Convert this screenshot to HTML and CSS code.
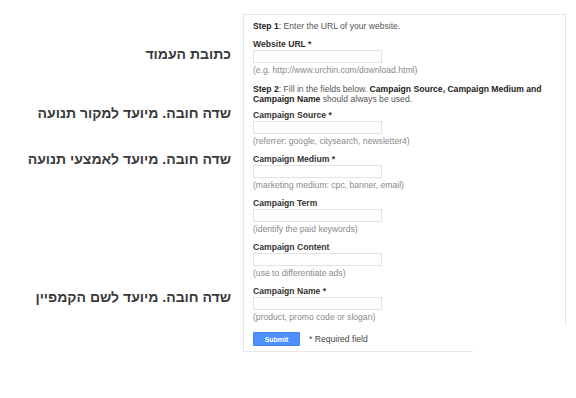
FILE: index.html
```html
<!DOCTYPE html>
<html lang="he">

<head>
    <meta charset="UTF-8">
    <title>URL Builder</title>
    <link rel="stylesheet" href="styles.css">
</head>

<body>
    <div class="page">
        <div class="notes" dir="rtl">
            <p class="note note-url">כתובת העמוד</p>
            <p class="note note-source">שדה חובה. מיועד למקור תנועה</p>
            <p class="note note-medium">שדה חובה. מיועד לאמצעי תנועה</p>
            <p class="note note-name">שדה חובה. מיועד לשם הקמפיין</p>
        </div>
        <div class="builder">
            <div class="panel">
                <p class="step"><b>Step 1</b>: Enter the URL of your website.</p>
                <div class="field">
                    <label>Website URL *</label>
                    <input type="text" class="box">
                    <span class="hint">(e.g. http://www.urchin.com/download.html)</span>
                </div>
                <p class="step step-two"><b>Step 2</b>: Fill in the fields below. <b>Campaign Source, Campaign Medium and Campaign Name</b> should always be used.</p>
                <div class="field">
                    <label>Campaign Source *</label>
                    <input type="text" class="box">
                    <span class="hint">(referrer: google, citysearch, newsletter4)</span>
                </div>
                <div class="field">
                    <label>Campaign Medium *</label>
                    <input type="text" class="box">
                    <span class="hint">(marketing medium: cpc, banner, email)</span>
                </div>
                <div class="field">
                    <label>Campaign Term</label>
                    <input type="text" class="box">
                    <span class="hint">(identify the paid keywords)</span>
                </div>
                <div class="field">
                    <label>Campaign Content</label>
                    <input type="text" class="box">
                    <span class="hint">(use to differentiate ads)</span>
                </div>
                <div class="field">
                    <label>Campaign Name *</label>
                    <input type="text" class="box">
                    <span class="hint">(product, promo code or slogan)</span>
                </div>
            </div>
            <div class="actions">
                <button type="button" class="submit">Submit</button>
                <span class="required">* Required field</span>
            </div>
        </div>
    </div>
</body>
</html>
```

FILE: styles.css
```css
* {
    padding: 0;
    margin: 0;
    box-sizing: border-box;
}

body {
    background: #fff;
    font-family: "Liberation Sans", Arial, sans-serif;
}

.page {
    display: flex;
    align-items: flex-start;
    padding-top: 14px;
}

.notes {
    width: 231px;
    margin-right: 12px;
    text-align: right;
}

.note {
    font-size: 14px;
    font-weight: bold;
    line-height: 16px;
    color: #3a3a3a;
}

.note-url {
    margin-top: 32px;
}

.note-source {
    margin-top: 43px;
}

.note-medium {
    margin-top: 30px;
}

.note-name {
    margin-top: 122px;
}

.panel {
    width: 323px;
    border: 1px solid #e6e6e6;
    border-bottom: none;
    padding: 6px 9px 4px;
    font-size: 8.6px;
    color: #555;
}

.step {
    line-height: 10px;
}

.step b {
    color: #222;
}

.step-two {
    margin-top: 9px;
    padding-right: 10px;
}

.field {
    display: flex;
    flex-direction: column;
    margin-top: 8px;
}

.step-two + .field {
    margin-top: 6px;
}

.field label {
    font-weight: bold;
    line-height: 10px;
    color: #333;
}

.box {
    width: 129px;
    height: 13px;
    margin-top: 1px;
    border: 1px solid #e2e2e2;
    background: #fff;
}

.hint {
    margin-top: 2px;
    line-height: 10px;
    color: #8a8a8a;
}

.actions {
    width: 230px;
    display: flex;
    align-items: center;
    gap: 9px;
    border-left: 1px solid #e6e6e6;
    border-bottom: 1px solid #e6e6e6;
    padding: 6px 9px 5px;
    font-size: 8.6px;
}

.submit {
    width: 47px;
    height: 14px;
    border: 1px solid #3f84f2;
    border-radius: 1px;
    background: #4d90fe;
    color: #fff;
    font-family: inherit;
    font-size: 7px;
    font-weight: bold;
}

.required {
    color: #444;
}
```
